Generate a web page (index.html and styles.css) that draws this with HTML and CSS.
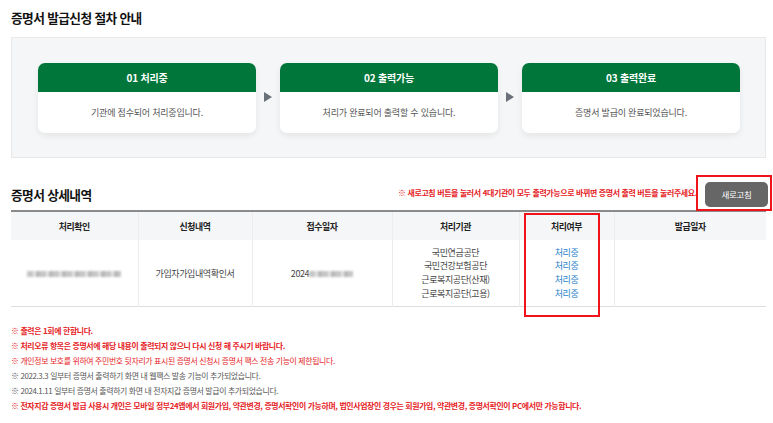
FILE: index.html
```html
<!DOCTYPE html>
<html lang="ko">
<head>
    <meta charset="UTF-8">
    <meta name="viewport" content="width=device-width, initial-scale=1.0">
    <title>증명서 발급신청</title>
    <link rel="stylesheet" href="styles.css">
</head>
<body>
    <div class="wrap">
        <h2 class="tit">증명서 발급신청 절차 안내</h2>
        <div class="step-box">
            <div class="step">
                <div class="step-head">01 처리중</div>
                <div class="step-body">기관에 접수되어 처리중입니다.</div>
            </div>
            <span class="arrow"></span>
            <div class="step">
                <div class="step-head">02 출력가능</div>
                <div class="step-body">처리가 완료되어 출력할 수 있습니다.</div>
            </div>
            <span class="arrow"></span>
            <div class="step">
                <div class="step-head">03 출력완료</div>
                <div class="step-body">증명서 발급이 완료되었습니다.</div>
            </div>
        </div>

        <div class="list-top">
            <h2 class="tit">증명서 상세내역</h2>
            <p class="refresh-note">※ 새로고침 버튼을 눌러서 4대기관이 모두 출력가능으로 바뀌면 증명서 출력 버튼을 눌러주세요.</p>
            <div class="mark btn-mark">
                <button class="btn-refresh">새로고침</button>
            </div>
        </div>

        <table class="list">
            <colgroup>
                <col style="width:127px">
                <col style="width:114px">
                <col style="width:140px">
                <col style="width:127px">
                <col style="width:95px">
                <col style="width:152px">
            </colgroup>
            <thead>
                <tr>
                    <th>처리확인</th>
                    <th>신청내역</th>
                    <th>접수일자</th>
                    <th>처리기관</th>
                    <th>처리여부</th>
                    <th>발급일자</th>
                </tr>
            </thead>
            <tbody>
                <tr>
                    <td><span class="blur" style="width:94px"></span></td>
                    <td>가입자가입내역확인서</td>
                    <td>2024<span class="blur" style="width:44px"></span></td>
                    <td class="lines">국민연금공단<br>국민건강보험공단<br>근로복지공단(산재)<br>근로복지공단(고용)</td>
                    <td class="lines state">처리중<br>처리중<br>처리중<br>처리중</td>
                    <td></td>
                </tr>
            </tbody>
        </table>
        <div class="mark col-mark"></div>

        <ul class="notes">
            <li class="bold">※ 출력은 1회에 한합니다.</li>
            <li class="bold">※ 처리오류 항목은 증명서에 해당 내용이 출력되지 않으니 다시 신청 해 주시기 바랍니다.</li>
            <li class="red">※ 개인정보 보호를 위하여 주민번호 뒷자리가 표시된 증명서 신청시 증명서 팩스 전송 기능이 제한됩니다.</li>
            <li>※ 2022.3.3 일부터 증명서 출력하기 화면 내 웹팩스 발송 기능이 추가되었습니다.</li>
            <li>※ 2024.1.11 일부터 증명서 출력하기 화면 내 전자지갑 증명서 발급이 추가되었습니다.</li>
            <li class="bold">※ 전자지갑 증명서 발급 사용시 개인은 모바일 정부24앱에서 회원가입, 약관변경, 증명서확인이 가능하며, 법인사업장인 경우는 회원가입, 약관변경, 증명서확인이 PC에서만 가능합니다.</li>
        </ul>
    </div>
</body>
</html>
```

FILE: styles.css
```css
body {
    font-family: "Noto Sans CJK KR", "Noto Sans", sans-serif;
    margin: 0;
    color: #333;
    background: #fff;
}

.wrap {
    width: 755px;
    margin: 0 0 0 11px;
    padding-top: 9px;
    position: relative;
}

.tit {
    margin: 0;
    font-size: 12.7px;
    font-weight: bold;
    color: #111;
    letter-spacing: -0.6px;
    line-height: 18px;
}

.step-box {
    margin-top: 10px;
    height: 121px;
    box-sizing: border-box;
    padding: 25px 26px 0 26px;
    background: #f5f6f7;
    border: 1px solid #e8e8e8;
    display: flex;
    align-items: flex-start;
}

.step {
    width: 218px;
    height: 70px;
    background: #fff;
    border-radius: 7px;
    box-shadow: 0 3px 6px rgba(0, 0, 0, 0.07);
    overflow: hidden;
    flex-shrink: 0;
}

.step-head {
    height: 29px;
    line-height: 29px;
    background: #00763a;
    color: #fff;
    text-align: center;
    font-size: 10px;
    font-weight: bold;
    letter-spacing: -0.2px;
}

.step-body {
    height: 41px;
    line-height: 41px;
    text-align: center;
    font-size: 9px;
    color: #555;
    letter-spacing: -0.2px;
}

.arrow {
    width: 0;
    height: 0;
    margin: 29px 8px 0 8px;
    border-top: 5.5px solid transparent;
    border-bottom: 5.5px solid transparent;
    border-left: 8px solid #6b717a;
    flex-shrink: 0;
}

.list-top {
    margin-top: 19px;
    height: 31px;
    display: flex;
    align-items: center;
}

.list-top .tit {
    flex: 1;
    margin-top: 4px;
}

.refresh-note {
    margin: 0 -1px 0 0;
    font-size: 7.95px;
    font-weight: bold;
    color: #e5231f;
    letter-spacing: -0.35px;
}

.mark {
    border: 2px solid #f0141a;
}

.btn-mark {
    padding: 5px 2px 2px 7px;
    margin-right: -6px;
}

.btn-refresh {
    display: block;
    width: 63px;
    height: 25px;
    border: none;
    border-radius: 5px;
    background: #666;
    color: #fff;
    font-family: inherit;
    font-size: 8.5px;
    letter-spacing: -0.3px;
    padding: 0;
}

.list {
    width: 755px;
    margin-top: 2px;
    border-collapse: collapse;
    table-layout: fixed;
    border-top: 2px solid #8a8a8a;
    border-bottom: 1px solid #ddd;
}

.list th {
    height: 28px;
    padding: 0;
    background: #f5f6f7;
    font-size: 8.9px;
    font-weight: bold;
    color: #222;
    letter-spacing: -0.4px;
}

.list td {
    height: 66px;
    padding: 0;
    text-align: center;
    font-size: 9px;
    color: #444;
    letter-spacing: -0.4px;
}

.list th + th,
.list td + td {
    border-left: 1px solid #ececec;
}

.list td.lines {
    line-height: 13.7px;
}

.list td.state {
    color: #2a7fc9;
}

.blur {
    display: inline-block;
    height: 6px;
    vertical-align: middle;
    background: repeating-linear-gradient(90deg, #c6c6c6 0 6px, #e2e2e2 6px 9px, #b8b8b8 9px 13px);
    filter: blur(1px);
}

.col-mark {
    position: absolute;
    left: 513px;
    top: 213px;
    width: 72px;
    height: 100px;
}

.notes {
    list-style: none;
    margin: 16px 0 0 0;
    padding: 0;
}

.notes li {
    font-size: 7.9px;
    line-height: 15px;
    color: #555;
    letter-spacing: -0.35px;
    white-space: nowrap;
}

.notes li.bold {
    color: #e5231f;
    font-weight: bold;
}

.notes li.red {
    color: #e5231f;
}
```
